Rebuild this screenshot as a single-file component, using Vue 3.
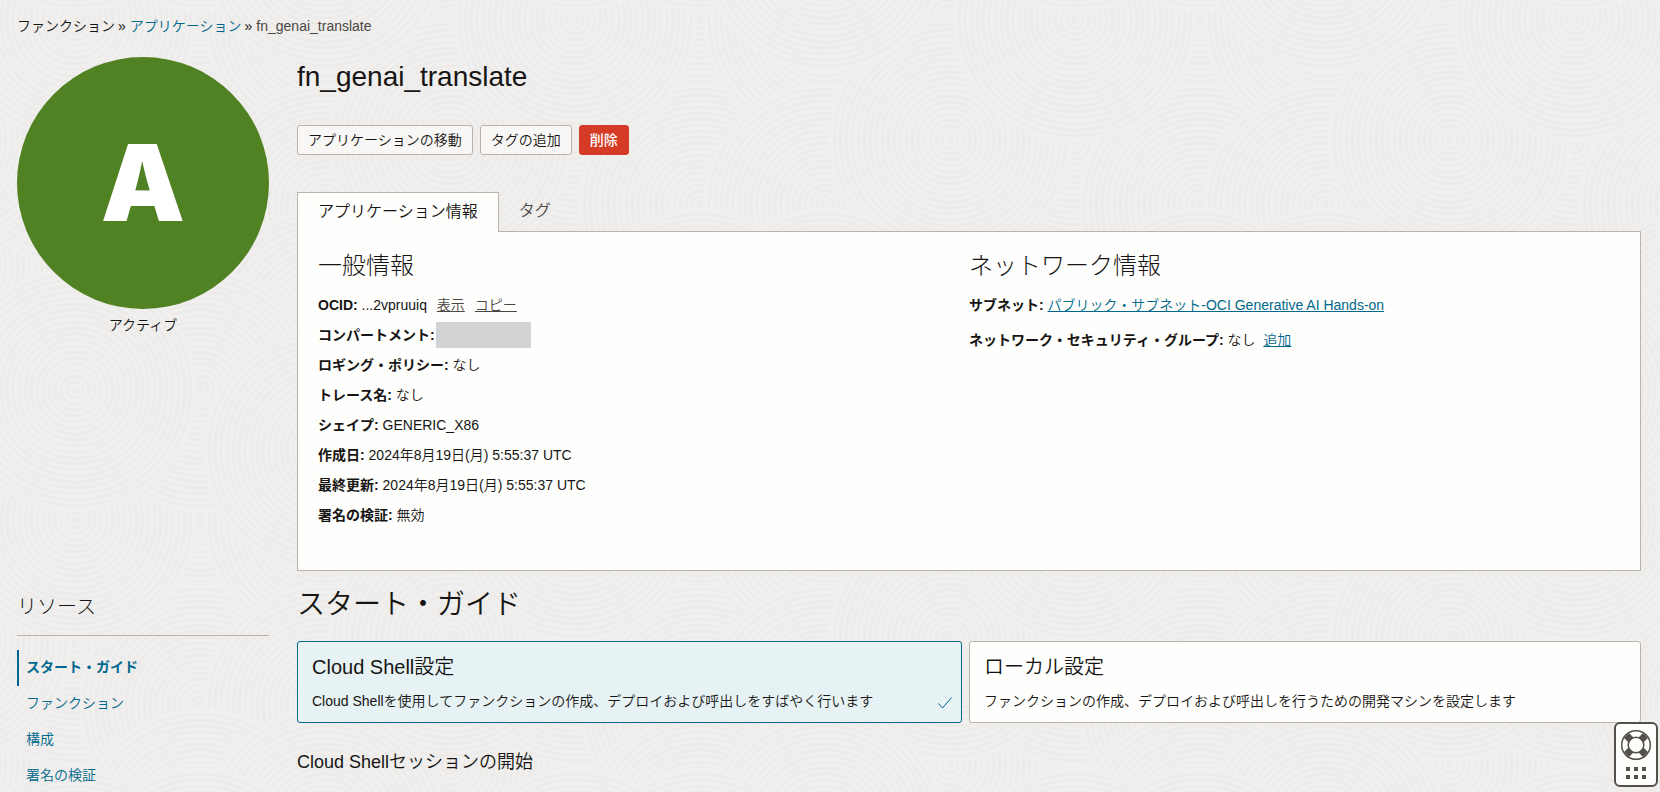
<template>
  <div class="app-page">
    <svg class="texture" aria-hidden="true">
      <defs>
        <g id="rings">
          <circle class="disc" r="122" />
          <circle v-for="r in rings" :key="r" class="ring" :r="r" />
        </g>
        <pattern id="swirl" width="500" height="500" patternUnits="userSpaceOnUse">
          <use v-for="(d, i) in discs" :key="i" href="#rings" :x="d[0]" :y="d[1]" />
        </pattern>
      </defs>
      <rect width="100%" height="100%" fill="url(#swirl)" />
    </svg>

    <nav class="breadcrumb" aria-label="breadcrumb">
      <span>ファンクション</span>
      <span class="sep">»</span>
      <a href="#">アプリケーション</a>
      <span class="sep">»</span>
      <span class="current">{{ appName }}</span>
    </nav>

    <div class="layout">
      <aside class="side">
        <div class="status-circle">A</div>
        <p class="status-text">アクティブ</p>
      </aside>

      <main class="main">
        <h1>{{ appName }}</h1>
        <div class="actions">
          <button type="button" class="btn">アプリケーションの移動</button>
          <button type="button" class="btn">タグの追加</button>
          <button type="button" class="btn btn-danger">削除</button>
        </div>

        <div class="tabs" role="tablist">
          <button
            v-for="tab in tabs"
            :key="tab"
            type="button"
            role="tab"
            class="tab"
            :class="{ active: tab === activeTab }"
            :aria-selected="tab === activeTab"
            @click="activeTab = tab"
          >
            {{ tab }}
          </button>
        </div>
        <section class="panel">
          <div class="info">
            <h2>一般情報</h2>
            <ul>
              <li>
                <b>OCID:</b> ...2vpruuiq
                <a href="#" class="dark">表示</a>
                <a href="#" class="dark">コピー</a>
              </li>
              <li class="masked"><b>コンパートメント:</b><span class="mask"></span></li>
              <li v-for="item in general" :key="item.label">
                <b>{{ item.label }}:</b> {{ item.value }}
              </li>
            </ul>
          </div>
          <div class="info network">
            <h2>ネットワーク情報</h2>
            <ul>
              <li>
                <b>サブネット:</b>&nbsp;<a href="#">パブリック・サブネット-OCI Generative AI Hands-on</a>
              </li>
              <li><b>ネットワーク・セキュリティ・グループ:</b> なし&nbsp; <a href="#">追加</a></li>
            </ul>
          </div>
        </section>
      </main>

      <aside class="side resources">
        <h3>リソース</h3>
        <nav>
          <a
            v-for="item in resources"
            :key="item"
            href="#"
            :class="{ active: item === activeResource }"
            @click.prevent="activeResource = item"
            >{{ item }}</a
          >
        </nav>
      </aside>

      <section class="main guide">
        <h2>スタート・ガイド</h2>
        <div class="cards">
          <button
            v-for="card in cards"
            :key="card.id"
            type="button"
            class="card"
            :class="{ selected: card.id === selectedCard }"
            @click="selectedCard = card.id"
          >
            <span class="card-title">{{ card.title }}</span>
            <span class="card-text">{{ card.text }}</span>
            <svg v-if="card.id === selectedCard" class="check" viewBox="0 0 14 12">
              <path d="M0.5 6.5 L4.5 11 L13.5 0.5" />
            </svg>
          </button>
        </div>
        <h4>Cloud Shellセッションの開始</h4>
      </section>
    </div>

    <button type="button" class="help" aria-label="ヘルプ">
      <svg viewBox="0 0 32 52">
        <path class="bands" d="M6.5 6.5 L11 11 M25.5 6.5 L21 11 M6.5 25.5 L11 21 M25.5 25.5 L21 21" />
        <circle cx="16" cy="16" r="14.3" class="line" />
        <circle cx="16" cy="16" r="7.8" class="line" />
        <path
          class="dots"
          d="M6 38h4v4h-4z M14 38h4v4h-4z M22 38h4v4h-4z M6 46h4v4h-4z M14 46h4v4h-4z M22 46h4v4h-4z"
        />
      </svg>
    </button>
  </div>
</template>

<script setup>
import { ref } from "vue";

const appName = "fn_genai_translate";

const tabs = ["アプリケーション情報", "タグ"];
const activeTab = ref(tabs[0]);

const general = [
  { label: "ロギング・ポリシー", value: "なし" },
  { label: "トレース名", value: "なし" },
  { label: "シェイプ", value: "GENERIC_X86" },
  { label: "作成日", value: "2024年8月19日(月) 5:55:37 UTC" },
  { label: "最終更新", value: "2024年8月19日(月) 5:55:37 UTC" },
  { label: "署名の検証", value: "無効" },
];

const resources = ["スタート・ガイド", "ファンクション", "構成", "署名の検証"];
const activeResource = ref(resources[0]);

const cards = [
  {
    id: "cloud",
    title: "Cloud Shell設定",
    text: "Cloud Shellを使用してファンクションの作成、デプロイおよび呼出しをすばやく行います",
  },
  {
    id: "local",
    title: "ローカル設定",
    text: "ファンクションの作成、デプロイおよび呼出しを行うための開発マシンを設定します",
  },
];
const selectedCard = ref("cloud");

// 背景の波紋。タイルの端をまたぐ円は反対側にも描く
const rings = Array.from({ length: 20 }, (_, i) => 2 + i * 6);
const centers = [
  [200, 20],
  [450, 265],
  [75, 145],
  [200, 205],
  [325, 20],
  [75, 20],
  [450, 20],
  [325, 205],
  [450, 140],
  [200, 330],
  [325, 330],
  [75, 520],
  [200, 390],
  [75, 390],
  [325, 450],
];
const discs = centers.flatMap(([x, y]) =>
  [-500, 0, 500].flatMap((dx) => [-500, 0, 500].map((dy) => [x + dx, y + dy]))
);
</script>

<style>
body {
  margin: 0;
  background: #f0efed;
}
</style>

<style scoped>
.app-page {
  position: relative;
  padding: 16px 19px 0 17px;
  font-family: "Liberation Sans", "Noto Sans CJK JP", sans-serif;
  font-size: 14px;
  font-weight: 350;
  line-height: 20px;
  color: #161513;
}

.texture {
  position: absolute;
  inset: 0;
  width: 100%;
  height: 100%;
  z-index: -1;
}

.disc {
  fill: #f0efed;
}

.ring {
  fill: none;
  stroke: #ecebe9;
  stroke-width: 2;
}

h1,
h2,
h3,
h4,
p,
ul {
  margin: 0;
  padding: 0;
  font-weight: inherit;
}

b {
  font-weight: 700;
}

button {
  font-family: inherit;
  font-weight: inherit;
  color: inherit;
  cursor: pointer;
}

a {
  color: #00688c;
}

.breadcrumb {
  display: flex;
  gap: 4px;
}

.breadcrumb a {
  text-decoration: none;
}

.sep {
  margin-left: -1px;
}

.current {
  color: #4a4744;
}

.layout {
  display: grid;
  grid-template-columns: 252px minmax(0, 1fr);
  column-gap: 28px;
  margin-top: 21px;
}

.status-circle {
  display: flex;
  align-items: center;
  justify-content: center;
  height: 252px;
  border-radius: 50%;
  background: #508223;
  color: #fff;
  font-family: Inter, "Liberation Sans", sans-serif;
  font-size: 106px;
  font-weight: 900;
}

.status-text {
  padding-top: 6px;
  text-align: center;
}

h1 {
  font-size: 28px;
  line-height: 40px;
}

.actions {
  display: flex;
  gap: 7px;
  margin-top: 28px;
}

.btn {
  height: 30px;
  padding: 0 10px 2px;
  border: 1px solid #bab4ad;
  border-radius: 3px;
  background: #f8f7f5;
  font-size: 14px;
}

.btn-danger {
  border-color: #d63b25;
  background: #d63b25;
  color: #fff;
  font-weight: 500;
}

.tabs {
  display: flex;
  margin-top: 37px;
}

.tab {
  height: 39px;
  padding: 0 19px 6px;
  border: 1px solid transparent;
  border-bottom: 0;
  background: none;
  font-size: 16px;
  color: #4a4744;
}

.tab.active {
  position: relative;
  height: 40px;
  margin-bottom: -1px;
  padding: 0 20px 6px;
  border-color: #bab4ad;
  background: #fefefc;
  color: #161513;
}

.panel {
  display: grid;
  grid-template-columns: 1fr 1fr;
  padding: 18px 20px 40px;
  border: 1px solid #bab4ad;
  background: #fefefc;
}

.panel h2 {
  font-size: 24px;
  font-weight: 300;
  line-height: 32px;
}

.panel ul {
  margin-top: 8px;
  list-style: none;
}

.panel li {
  line-height: 30px;
}

.network li + li {
  margin-top: 5px;
}

.dark {
  margin-left: 6px;
  color: #4a4744;
}

.dark + .dark {
  margin-left: 10px;
}

.masked {
  display: flex;
  align-items: center;
  gap: 1px;
}

.mask {
  width: 95px;
  height: 26px;
  background: #d2d3d5;
}

.resources {
  padding-top: 20px;
}

.resources h3 {
  padding-bottom: 12px;
  border-bottom: 1px solid #bab4ad;
  font-size: 20px;
  font-weight: 300;
  line-height: 32px;
}

.resources nav {
  display: flex;
  flex-direction: column;
  margin-top: 14px;
}

.resources nav a {
  padding: 0 0 2px 7px;
  border-left: 2px solid transparent;
  line-height: 34px;
  text-decoration: none;
}

.resources nav a.active {
  border-color: #00688c;
  font-weight: 700;
}

.guide h2 {
  padding-top: 14px;
  font-size: 28px;
  line-height: 40px;
}

.cards {
  display: grid;
  grid-template-columns: 1fr 1fr;
  margin-top: 16px;
}

.card {
  position: relative;
  display: flex;
  flex-direction: column;
  gap: 8px;
  padding: 9px 14px 11px;
  border: 1px solid #bab4ad;
  border-radius: 3px;
  background: #fefefc;
  font-size: 14px;
  line-height: 20px;
  text-align: left;
}

.card:first-child {
  margin-right: 7px;
}

.card.selected {
  border-color: #00688c;
  background: #e6f2f4;
}

.card-title {
  font-size: 20px;
  line-height: 32px;
}

.check {
  position: absolute;
  right: 9px;
  bottom: 13px;
  width: 14px;
  height: 12px;
  fill: none;
  stroke: #00688c;
}

h4 {
  margin-top: 25px;
  font-size: 18px;
  line-height: 28px;
}

.help {
  position: fixed;
  right: 2px;
  bottom: 5px;
  width: 44px;
  height: 65px;
  padding: 4px;
  border: 2px solid #54504c;
  border-radius: 6px;
  background: #fefefc;
}

.help svg {
  display: block;
  width: 32px;
  height: 52px;
}

.bands {
  stroke: #54504c;
  stroke-width: 7;
}

.line {
  fill: none;
  stroke: #54504c;
  stroke-width: 1.5;
}

.dots {
  fill: #54504c;
}
</style>
